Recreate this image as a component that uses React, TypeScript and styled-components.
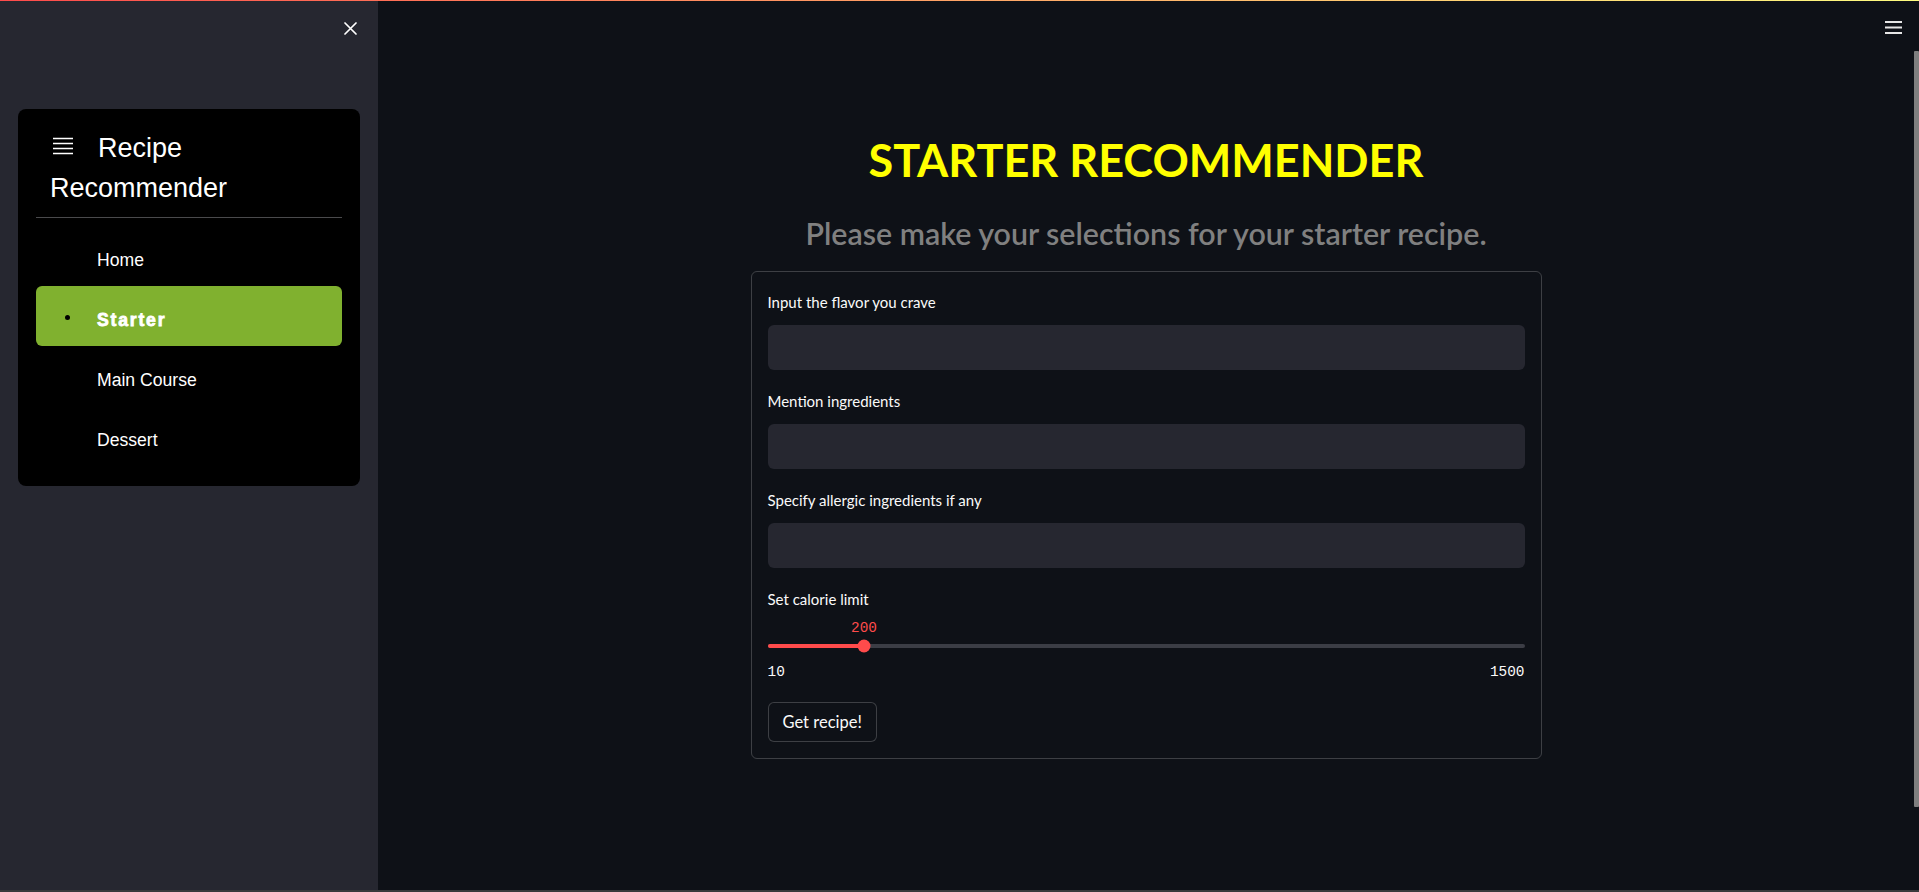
import React from "react";
import styled, { createGlobalStyle } from "styled-components";

const GlobalStyle = createGlobalStyle`
  html, body {
    margin: 0;
    padding: 0;
    height: 100%;
    background: #0e1117;
    overflow: hidden;
  }
  #root { height: 100%; }
  *, *::before, *::after { box-sizing: border-box; }
`;

const Shell = styled.div`
  display: flex;
  flex-direction: column;
  width: 1919px;
  height: 892px;
`;

const Decoration = styled.div`
  flex: none;
  height: 1px;
  background: linear-gradient(90deg, #ff4b4b, #fffd80);
`;

const Body = styled.div`
  flex: 1;
  display: flex;
  min-height: 0;
`;

const BottomEdge = styled.div`
  flex: none;
  height: 2px;
  background: #3a3a3c;
`;

/* ---------- Sidebar ---------- */
const Sidebar = styled.aside`
  flex: none;
  width: 378px;
  background: #262730;
  padding: 0 18px;
  display: flex;
  flex-direction: column;
`;

const SidebarTop = styled.div`
  height: 108px;
  display: flex;
  justify-content: flex-end;
  align-items: flex-start;
  padding: 21px 3px 0 0;
`;

const CloseButton = styled.button`
  display: flex;
  padding: 0;
  border: none;
  background: transparent;
  cursor: pointer;
`;

const MenuCard = styled.nav`
  background: #000000;
  border-radius: 8px;
  padding: 19px 18px 20px;
  display: flex;
  flex-direction: column;
`;

const MenuTitle = styled.div`
  font-family: "Liberation Sans", Arial, sans-serif;
  font-size: 27px;
  line-height: 40px;
  color: #ffffff;
  padding-left: 14px;
`;

const TitleIcon = styled.svg`
  display: inline-block;
  vertical-align: baseline;
  margin: 0 25px 0 3px;
`;

const Divider = styled.hr`
  border: none;
  height: 1px;
  background: #4a4a4c;
  margin: 9px 0 8px;
`;

const MenuList = styled.ul`
  list-style: none;
  margin: 0;
  padding: 0;
  display: flex;
  flex-direction: column;
`;

const MenuItem = styled.li<{ $active?: boolean }>`
  height: 60px;
  display: flex;
  align-items: center;
  padding: 8px 0 0 29px;
  border-radius: 6px;
  background: ${(p) => (p.$active ? "#80b12f" : "transparent")};
  font-family: "Liberation Sans", Arial, sans-serif;
  font-size: 17.6px;
  color: #ffffff;
  font-weight: ${(p) => (p.$active ? 700 : 400)};
  letter-spacing: ${(p) => (p.$active ? "1.8px" : "0")};
  -webkit-text-stroke: ${(p) => (p.$active ? "0.8px #ffffff" : "0")};
  cursor: pointer;
`;

const Dot = styled.span`
  flex: none;
  width: 5px;
  height: 5px;
  border-radius: 50%;
  background: #000000;
  margin-right: 27px;
  margin-top: -6px;
`;

/* ---------- Main ---------- */
const Main = styled.main`
  flex: 1;
  display: flex;
  min-width: 0;
`;

const MainColumn = styled.div`
  flex: 1;
  display: flex;
  flex-direction: column;
  align-items: center;
`;

const Header = styled.header`
  align-self: stretch;
  height: 60px;
  display: flex;
  justify-content: flex-end;
  padding: 19px 12px 0 0;
`;

const MenuButton = styled.button`
  display: flex;
  padding: 0;
  border: none;
  background: transparent;
  height: 16px;
  cursor: pointer;
`;

const Content = styled.section`
  width: 791px;
  padding-top: 72px;
  display: flex;
  flex-direction: column;
  align-items: center;
`;

const PageTitle = styled.h1`
  margin: 0;
  font-family: Lato, "Noto Sans", sans-serif;
  font-weight: 700;
  font-size: 45px;
  line-height: 1.2;
  color: #ffff00;
  text-align: center;
  white-space: nowrap;
`;

const Subtitle = styled.h3`
  margin: 28px 0 0;
  font-family: Lato, "Noto Sans", sans-serif;
  font-weight: 600;
  font-size: 30.4px;
  line-height: 1.2;
  color: #808080;
  text-align: center;
  white-space: nowrap;
`;

const Form = styled.form`
  align-self: stretch;
  margin-top: 20px;
  border: 1px solid rgba(250, 250, 250, 0.2);
  border-radius: 6px;
  padding: 18px 16px 16px;
  display: flex;
  flex-direction: column;
  gap: 19px;
`;

const Field = styled.div`
  display: flex;
  flex-direction: column;
`;

const Label = styled.label`
  font-family: Lato, "Noto Sans", sans-serif;
  font-size: 15px;
  line-height: 24px;
  color: #fafafa;
`;

const TextInput = styled.input`
  margin-top: 11px;
  height: 45px;
  border: none;
  border-radius: 6px;
  background: #262730;
  color: #fafafa;
  padding: 0 12px;
  font-family: Lato, sans-serif;
  font-size: 16px;
  outline: none;
`;

const SliderBlock = styled.div`
  display: flex;
  flex-direction: column;
`;

const ValueRow = styled.div`
  position: relative;
  height: 16px;
  margin-top: 9px;
`;

const ValueLabel = styled.span`
  position: absolute;
  top: 0;
  transform: translateX(-50%);
  font-family: "Liberation Mono", "DejaVu Sans Mono", monospace;
  font-size: 14.4px;
  line-height: 16px;
  color: #ff4b4b;
`;

const TrackArea = styled.div`
  position: relative;
  height: 20px;
  display: flex;
  align-items: center;
`;

const Track = styled.div`
  flex: 1;
  height: 4px;
  border-radius: 2px;
  background: #3b3d45;
  display: flex;
`;

const TrackFill = styled.div`
  height: 100%;
  border-radius: 2px;
  background: #ff4b4b;
`;

const Thumb = styled.div`
  position: absolute;
  top: 50%;
  width: 13px;
  height: 13px;
  border-radius: 50%;
  background: #ff4b4b;
  transform: translate(-50%, -50%);
`;

const TickRow = styled.div`
  margin-top: 8px;
  display: flex;
  justify-content: space-between;
  font-family: "Liberation Mono", "DejaVu Sans Mono", monospace;
  font-size: 14.4px;
  line-height: 16px;
  color: #fafafa;
`;

const SubmitButton = styled.button`
  align-self: flex-start;
  margin-top: 3px;
  height: 40px;
  padding: 0 14px;
  border: 1px solid rgba(250, 250, 250, 0.2);
  border-radius: 6px;
  background: #0e1117;
  color: #fafafa;
  font-family: Lato, "Noto Sans", sans-serif;
  font-size: 16.5px;
  cursor: pointer;
`;

const ScrollRail = styled.div`
  flex: none;
  width: 5px;
  padding-top: 50px;
`;

const ScrollThumb = styled.div`
  height: 756px;
  background: #7f7f7f;
  border-radius: 1px;
`;

const CloseIcon = () => (
  <svg width="13" height="13" viewBox="0 0 13 13">
    <path d="M1 1 L12 12 M12 1 L1 12" stroke="#ffffff" strokeWidth="1.7" strokeLinecap="round" />
  </svg>
);

const ListIcon = () => (
  <TitleIcon width="20" height="20" viewBox="0 0 20 20">
    <path d="M0 1.5 H20 M0 6.5 H20 M0 11.5 H20 M0 16.5 H20" stroke="#ffffff" strokeWidth="1.6" />
  </TitleIcon>
);

const HamburgerIcon = () => (
  <svg width="17" height="14" viewBox="0 0 17 14">
    <path d="M0 2 H17 M0 7.5 H17 M0 13 H17" stroke="#e6e6e6" strokeWidth="2" />
  </svg>
);

const MIN = 10;
const MAX = 1500;
const VALUE = 200;

const menu = ["Home", "Starter", "Main Course", "Dessert"];

export default function App() {
  const pct = ((VALUE - MIN) / (MAX - MIN)) * 100;
  return (
    <>
      <GlobalStyle />
      <Shell>
        <Decoration />
        <Body>
          <Sidebar>
            <SidebarTop>
              <CloseButton aria-label="Close sidebar">
                <CloseIcon />
              </CloseButton>
            </SidebarTop>
            <MenuCard>
              <MenuTitle>
                <ListIcon />
                Recipe Recommender
              </MenuTitle>
              <Divider />
              <MenuList>
                {menu.map((m) => (
                  <MenuItem key={m} $active={m === "Starter"}>
                    <Dot />
                    {m}
                  </MenuItem>
                ))}
              </MenuList>
            </MenuCard>
          </Sidebar>
          <Main>
            <MainColumn>
              <Header>
                <MenuButton aria-label="Main menu">
                  <HamburgerIcon />
                </MenuButton>
              </Header>
              <Content>
                <PageTitle>STARTER RECOMMENDER</PageTitle>
                <Subtitle>Please make your selections for your starter recipe.</Subtitle>
                <Form onSubmit={(e) => e.preventDefault()}>
                  <Field>
                    <Label>Input the flavor you crave</Label>
                    <TextInput type="text" />
                  </Field>
                  <Field>
                    <Label>Mention ingredients</Label>
                    <TextInput type="text" />
                  </Field>
                  <Field>
                    <Label>Specify allergic ingredients if any</Label>
                    <TextInput type="text" />
                  </Field>
                  <Field>
                    <Label>Set calorie limit</Label>
                    <SliderBlock>
                      <ValueRow>
                        <ValueLabel style={{ left: `${pct}%` }}>{VALUE}</ValueLabel>
                      </ValueRow>
                      <TrackArea>
                        <Track>
                          <TrackFill style={{ width: `${pct}%` }} />
                        </Track>
                        <Thumb style={{ left: `${pct}%` }} />
                      </TrackArea>
                      <TickRow>
                        <span>{MIN}</span>
                        <span>{MAX}</span>
                      </TickRow>
                    </SliderBlock>
                  </Field>
                  <SubmitButton type="submit">Get recipe!</SubmitButton>
                </Form>
              </Content>
            </MainColumn>
            <ScrollRail>
              <ScrollThumb />
            </ScrollRail>
          </Main>
        </Body>
        <BottomEdge />
      </Shell>
    </>
  );
}
